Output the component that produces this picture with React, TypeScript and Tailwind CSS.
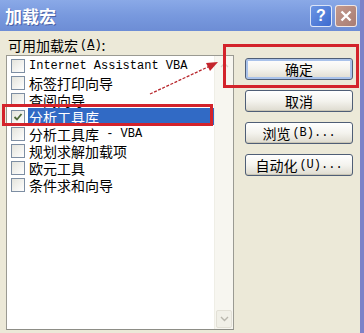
const items = [
  { zh: "", en: "Internet Assistant VBA" },
  { zh: "标签打印向导" },
  { zh: "查阅向导" },
  { zh: "分析工具库", checked: true, selected: true },
  { zh: "分析工具库", en: "\u00a0- VBA" },
  { zh: "规划求解加载项" },
  { zh: "欧元工具" },
  { zh: "条件求和向导" },
];

const cjk = "font-['SimSun','Noto_Sans_CJK_SC',sans-serif]";
const mono = "font-['Liberation_Mono','Noto_Sans_CJK_SC',monospace]";

function Check({ checked }: { checked?: boolean }) {
  return (
    <span className="w-[14px] h-[14px] shrink-0 border border-[#7d8ea3] bg-gradient-to-br from-[#e4e4dc] to-white flex items-center justify-center">
      {checked && (
        <svg width="10" height="10" viewBox="0 0 10 10">
          <path d="M1.5 5 L4 7.5 L8.5 2" fill="none" stroke="#4f6a3a" strokeWidth="1.8" />
        </svg>
      )}
    </span>
  );
}

function XpButton({ label, hot, focus }: { label: React.ReactNode; hot?: string; focus?: boolean }) {
  return (
    <button
      className={`w-[108px] h-[22px] rounded-[3px] border border-[#4f5e76] bg-gradient-to-b from-white via-[#f4f3ee] to-[#dedbcf] text-[14px] text-black ${cjk} flex items-center justify-center leading-none ${
        focus ? "shadow-[inset_0_0_0_2px_#a9c2ea]" : "shadow-[inset_0_-1px_0_#c9c5b5]"
      }`}
    >
      {label}
      {hot && <span className={`${mono} text-[12px] ml-[2px]`}>({hot})...</span>}
    </button>
  );
}

export default function App() {
  return (
    <div className="w-[364px] h-[333px] overflow-hidden relative bg-[#ece9d8] flex flex-col border-r-4 border-r-[#7c82c8]">
      {/* title bar */}
      <div className="h-[31px] shrink-0 bg-gradient-to-b from-[#8aa9e7] via-[#7899de] to-[#6d8dd5] flex items-center pl-[5px] pr-[3px]">
        <span className={`text-white text-[17px] font-bold ${cjk} [text-shadow:1px_1px_0_#4a63a8]`}>加载宏</span>
        <div className="ml-auto flex gap-[3px]">
          <div className="w-[22px] h-[22px] rounded-[3px] border border-white/80 bg-gradient-to-br from-[#6c95e3] to-[#3d6ad0] flex items-center justify-center text-white text-[16px] font-bold font-['Liberation_Sans',sans-serif]">
            ?
          </div>
          <div className="w-[22px] h-[22px] rounded-[3px] border border-white/80 bg-gradient-to-br from-[#c4998c] to-[#a77d74] flex items-center justify-center">
            <svg width="14" height="14" viewBox="0 0 14 14">
              <path d="M2.5 2.5 L11.5 11.5 M11.5 2.5 L2.5 11.5" stroke="white" strokeWidth="2.4" />
            </svg>
          </div>
        </div>
      </div>

      <div className="flex flex-1 min-h-0">
        {/* left column */}
        <div className="flex flex-col pl-[6px] w-[234px]">
          <div className={`h-[24px] pt-[4px] pl-[2px] text-[14px] text-black ${cjk} flex items-start`}>
            可用加载宏<span className={`${mono} text-[12px] ml-[2px] mt-[1px]`}>(<span className="underline">A</span>)</span>:
          </div>
          <div className="flex-1 mb-[3px] border border-[#9a9a92] border-b-[#8d8d86] bg-white flex">
            <div className="flex-1 pt-[1px] pl-[4px]">
              {items.map((it, i) => (
                <div key={i} className="h-[17px] flex items-center gap-[3px]">
                  <Check checked={it.checked} />
                  <span
                    className={`h-[17px] flex items-center pl-[1px] pr-2 text-[14px] leading-none whitespace-pre ${
                      it.selected ? "bg-[#316ac5] text-white flex-1" : "text-black"
                    }`}
                  >
                    {it.zh && <span className={cjk}>{it.zh}</span>}
                    {it.en && <span className={`${mono} text-[12px]`}>{it.en}</span>}
                  </span>
                </div>
              ))}
            </div>
            {/* scrollbar */}
            <div className="w-[19px] bg-[#f7f6f0] border-l border-[#efeee6] flex flex-col justify-between">
              <div className="h-[18px] flex items-center justify-center">
                <svg width="9" height="6" viewBox="0 0 9 6">
                  <path d="M1 5 L4.5 1.5 L8 5" fill="none" stroke="#d6d4cb" strokeWidth="1.4" />
                </svg>
              </div>
              <div className="h-[18px] mx-[1px] mb-[1px] rounded-[2px] border border-[#e2e0d6] bg-[#f1f0e8] flex items-center justify-center">
                <svg width="9" height="6" viewBox="0 0 9 6">
                  <path d="M1 1 L4.5 4.5 L8 1" fill="none" stroke="#b9b7ae" strokeWidth="1.4" />
                </svg>
              </div>
            </div>
          </div>
        </div>

        {/* right column */}
        <div className="flex flex-col gap-[10px] pt-[27px] pl-[11px]">
          <XpButton label="确定" focus />
          <XpButton label="取消" />
          <XpButton label="浏览" hot="B" />
          <XpButton label="自动化" hot="U" />
        </div>
      </div>

      {/* annotations */}
      <div className="absolute left-[2px] top-[104px] w-[211px] h-[22px] border-[3px] border-[#d3232b]" />
      <div className="absolute left-[223px] top-[44px] w-[136px] h-[44px] border-[3px] border-[#d3232b]" />
      <svg className="absolute left-0 top-0" width="364" height="333" viewBox="0 0 364 333">
        <path d="M150 94 L210 66" stroke="#b8262c" strokeWidth="1.3" strokeDasharray="3 1.5" />
        <path d="M218 62 L206 63 L210 71 Z" fill="#c4252c" />
      </svg>
    </div>
  );
}
